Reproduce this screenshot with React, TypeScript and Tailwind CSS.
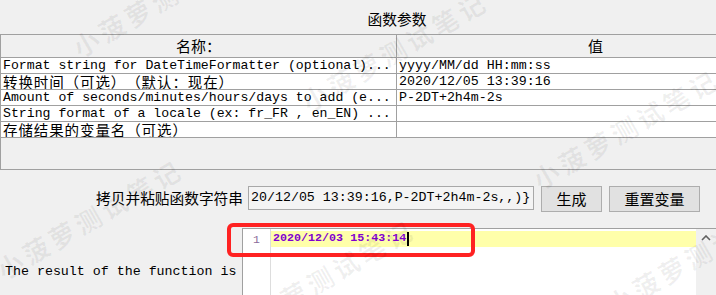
import React from "react";

const mono = "font-['Liberation_Mono','Noto_Sans_CJK_SC',monospace]";
const cjk = "font-['Noto_Sans_CJK_SC','Noto_Sans',sans-serif] [text-spacing-trim:space-all]";

type Row = { name: string; value: string; cn?: boolean };

const rows: Row[] = [
  { name: "Format string for DateTimeFormatter (optional)...", value: "yyyy/MM/dd HH:mm:ss" },
  { name: "转换时间（可选）（默认：现在）", value: "2020/12/05 13:39:16", cn: true },
  { name: "Amount of seconds/minutes/hours/days to add (e...", value: "P-2DT+2h4m-2s" },
  { name: "String format of a locale (ex: fr_FR , en_EN) ...", value: "" },
  { name: "存储结果的变量名（可选）", value: "", cn: true },
];

const marks = [
  { left: 68, top: 38 },
  { left: 297, top: 92 },
  { left: 528, top: 170 },
  { left: -8, top: 260 },
  { left: 224, top: 320 },
  { left: 602, top: 295 },
];

function Watermarks() {
  return (
    <>
      {marks.map((m, i) => (
        <span
          key={i}
          className={`pointer-events-none absolute origin-top-left rotate-[-30deg] whitespace-nowrap text-[26px] leading-[26px] font-bold tracking-[4px] text-black/[0.06] ${cjk}`}
          style={{ left: m.left, top: m.top }}
        >
          小菠萝测试笔记
        </span>
      ))}
    </>
  );
}

export default function App() {
  return (
    <div className="relative w-[716px] h-[295px] overflow-hidden bg-[#f0f0f0] text-black">
      <div className="w-[794px]">
        <div className={`h-[34px] pt-[9px] text-center text-[14.7px] leading-[20px] ${cjk}`}>函数参数</div>

        <div className="flex h-[136px] flex-col border-y border-l border-[#a0a0a0]">
          <div className="flex h-[23px] border-b border-[#a0a0a0] bg-[#f0f0f0]">
            <div className={`flex w-[396px] items-center justify-center border-r border-[#a0a0a0] text-[15px] ${cjk}`}>
              名称：
            </div>
            <div className={`flex flex-1 items-center justify-center text-[15px] ${cjk}`}>值</div>
          </div>
          {rows.map((r, i) => (
            <div key={i} className="flex h-[16px] border-b border-[#a0a0a0] bg-white">
              <div
                className={`w-[396px] overflow-hidden whitespace-nowrap border-r border-[#a0a0a0] pl-[2px] leading-[15px] ${
                  r.cn ? `text-[14.5px] tracking-[0.9px] ${cjk}` : `text-[13.2px] ${mono}`
                }`}
              >
                {r.name}
              </div>
              <div className={`flex-1 pl-[2px] text-[13.3px] leading-[15px] ${mono}`}>{r.value}</div>
            </div>
          ))}
          <div className="flex-1" />
        </div>
      </div>

      <div className="mt-[16px] flex items-start">
        <div className={`w-[243px] pt-[3px] text-right text-[14.7px] leading-[18px] ${cjk}`}>拷贝并粘贴函数字符串</div>
        <div
          className={`ml-[5px] flex h-[24px] w-[286px] items-center overflow-hidden whitespace-nowrap border border-[#a8a8a8] bg-[#f4f4f4] pl-[2px] text-[13.3px] ${mono}`}
        >
          20/12/05 13:39:16,P-2DT+2h4m-2s,,)&#125;
        </div>
        <button
          className={`ml-[7px] h-[26px] w-[61px] border border-[#adadad] bg-[#e1e1e1] text-[15px] leading-[24px] ${cjk}`}
        >
          生成
        </button>
        <button
          className={`ml-[7px] h-[26px] w-[91px] border border-[#adadad] bg-[#e1e1e1] text-[15px] leading-[24px] ${cjk}`}
        >
          重置变量
        </button>
      </div>

      <div className="mt-[16px] flex">
        <div className={`w-[242px] pl-[5px] pt-[36px] text-[13.3px] leading-[16px] ${mono}`}>
          The result of the function is
        </div>
        <div className="flex h-[80px] flex-1 border-l border-t border-[#a0a0a0] bg-white">
          <div className="w-[28px] border-r border-[#dddddd] pt-[4px] pl-[10px] text-[11.5px] leading-[14px] text-[#8a6a9a] font-['Liberation_Mono',monospace]">
            1
          </div>
          <div className="flex-1 pt-[2px]">
            <div className="flex h-[16px] items-center bg-[#ffffaa] pl-[2px]">
              <span className={`text-[11.7px] font-bold text-[#8000d0] ${mono}`}>2020/12/03 15:43:14</span>
              <span className="ml-[1px] h-[14px] w-[2px] bg-black" />
            </div>
          </div>
          <div className="flex w-[20px] justify-center bg-[#f0f0f0] pt-[6px]">
            <svg width="10" height="6" viewBox="0 0 10 6">
              <path d="M1 5 L5 1 L9 5" fill="none" stroke="#606060" strokeWidth="1.6" />
            </svg>
          </div>
        </div>
      </div>

      <div className="pointer-events-none absolute left-[227px] top-[223px] h-[34px] w-[248px] rounded-[6px] border-[4px] border-[#ff2222]" />
      <Watermarks />
    </div>
  );
}
